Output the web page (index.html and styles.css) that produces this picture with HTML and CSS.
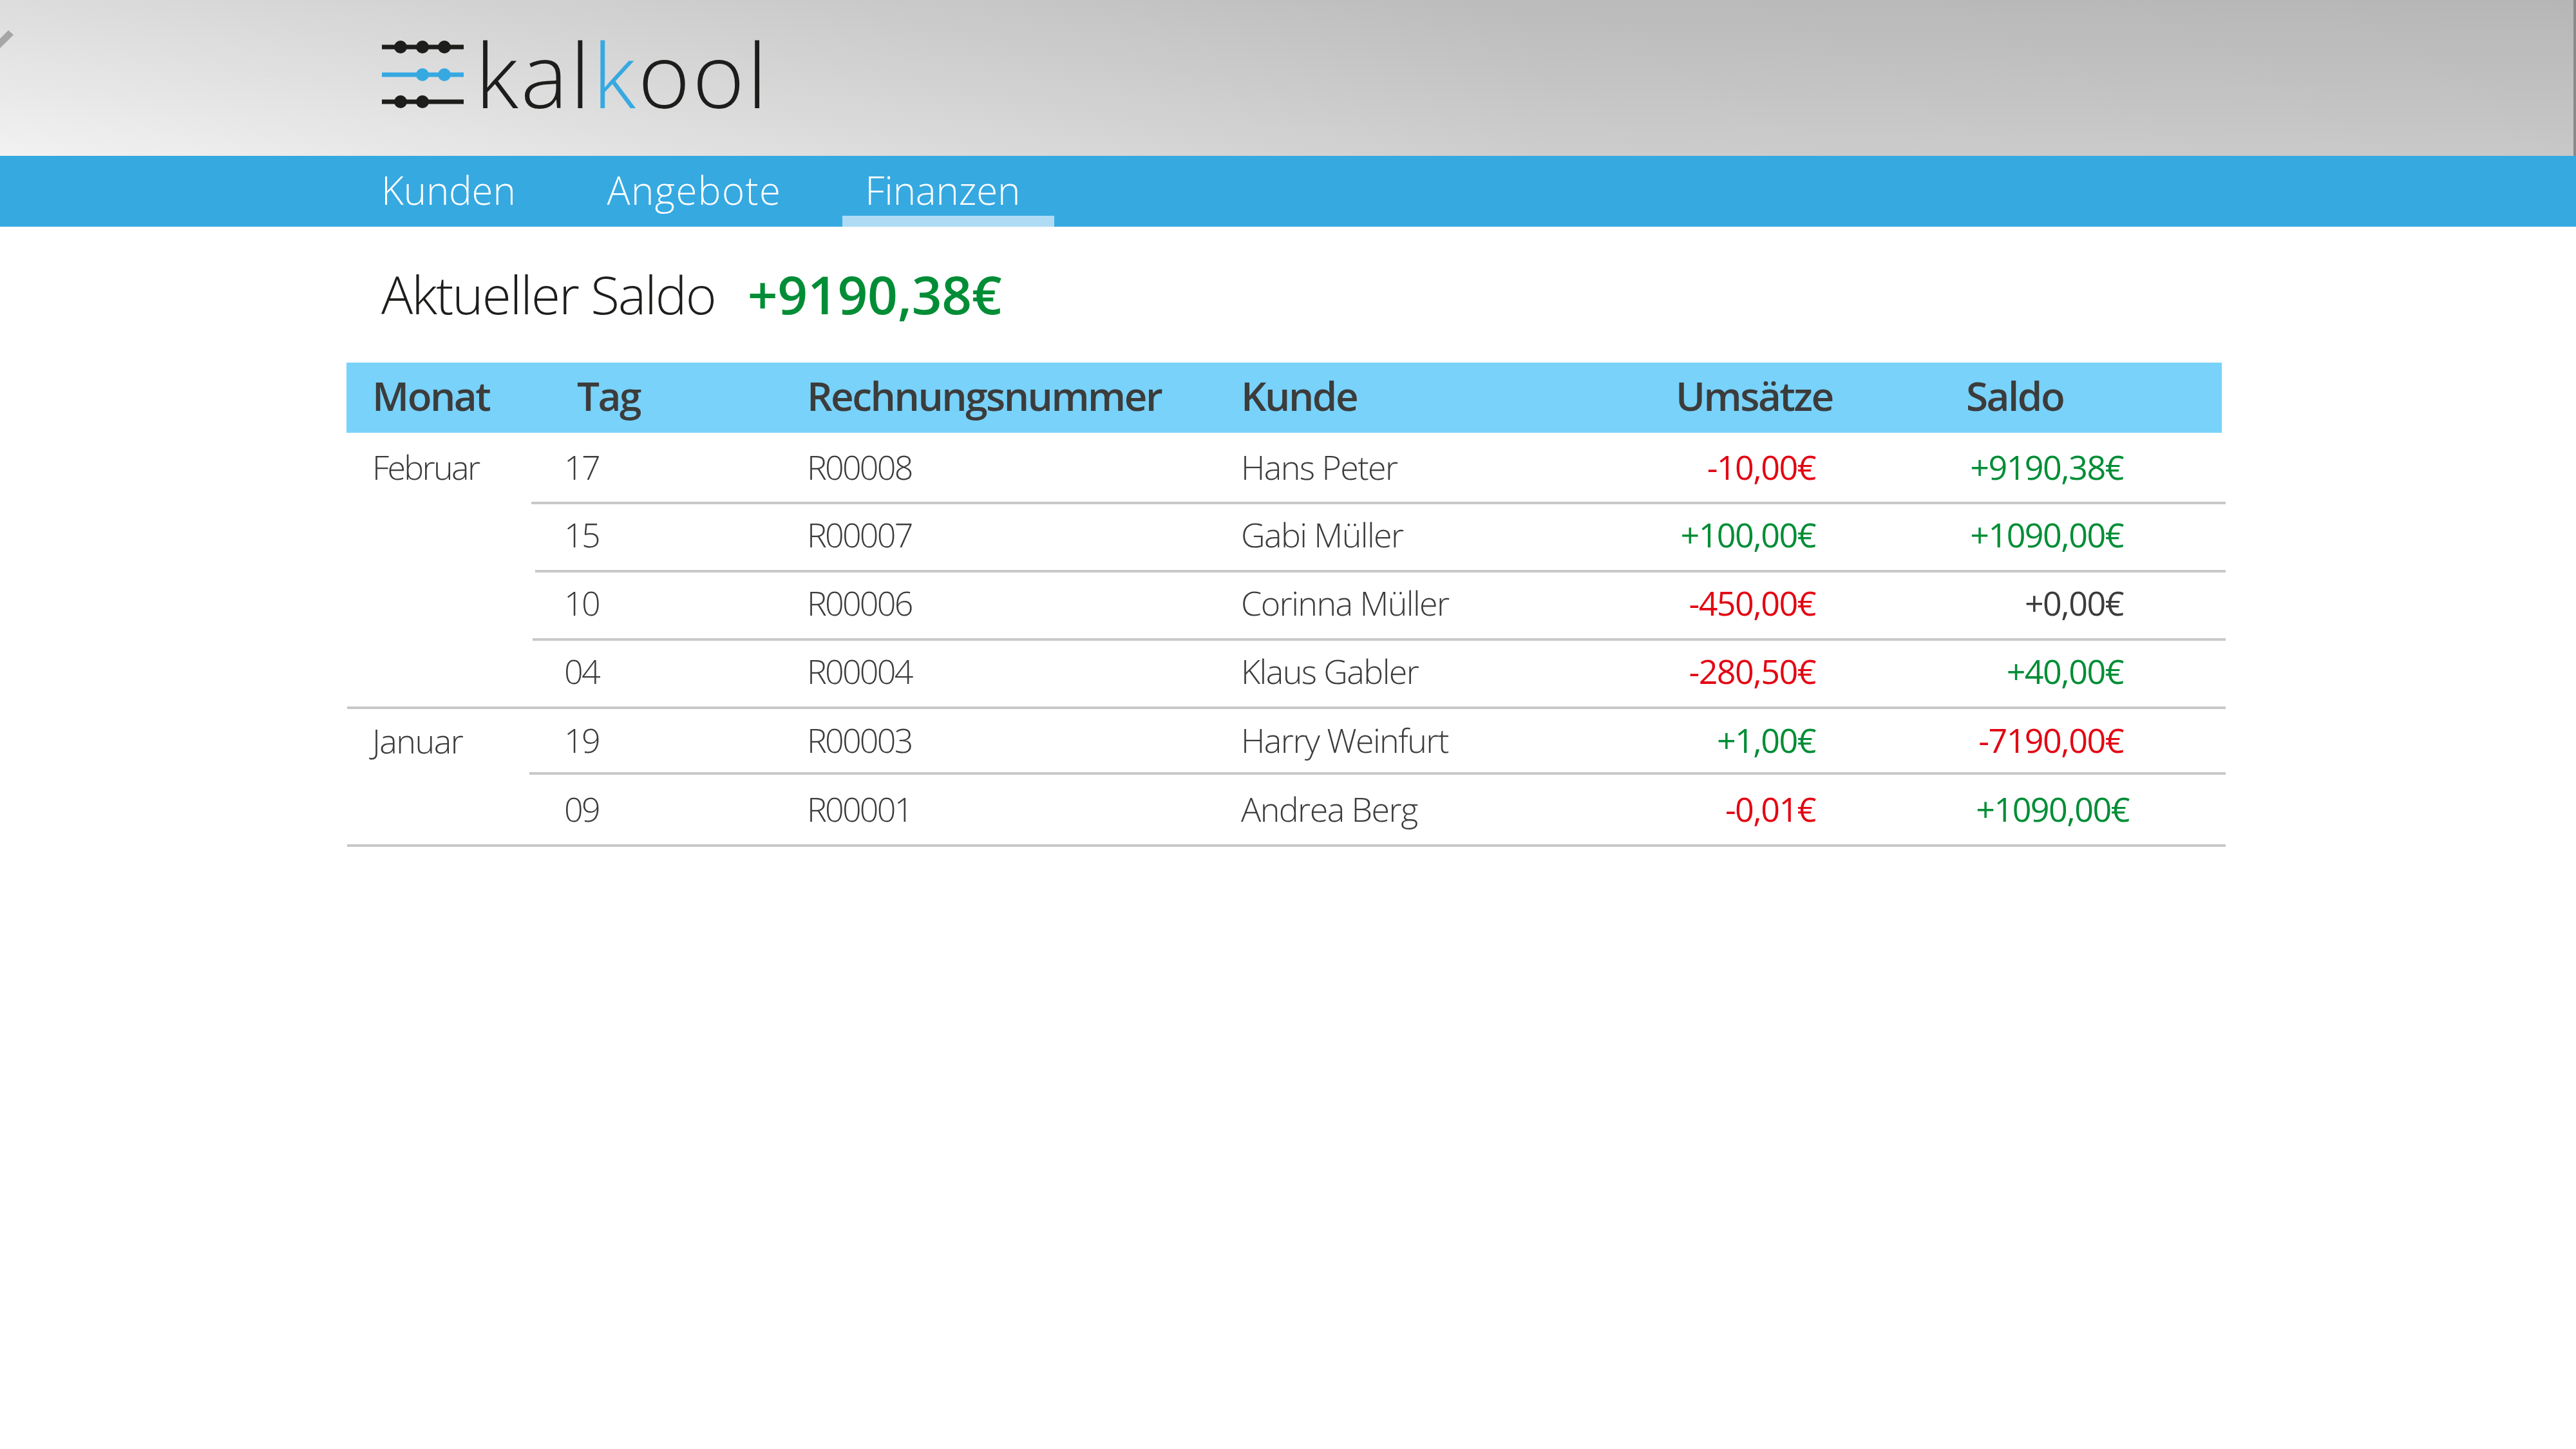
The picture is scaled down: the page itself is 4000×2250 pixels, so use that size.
FILE: index.html
```html
<!DOCTYPE html>
<html lang="de">
<head>
  <meta charset="UTF-8" />
  <meta name="viewport" content="width=device-width, initial-scale=1.0"/>
  <title>kalkool - Finanzen</title>
  <link rel="stylesheet" href="styles.css">
</head>
<body>

  <!-- Header -->
  <header class="top">
    <svg class="back-mark" width="22" height="30" viewBox="0 0 22 30"><polygon points="13,0 21,7 0,28 0,13" fill="#a6a6a6"/></svg>
    <div class="logo">
      <svg class="logo-icon" width="128" height="106" viewBox="0 0 128 106">
        <rect x="0" y="6.500" width="127" height="7" fill="#1d1d1b"/>
        <circle cx="29" cy="10" r="10" fill="#1d1d1b"/>
        <circle cx="63" cy="10" r="10" fill="#1d1d1b"/>
        <circle cx="97" cy="10" r="10" fill="#1d1d1b"/>
        <rect x="0" y="49.500" width="127" height="7" fill="#36a9e1"/>
        <circle cx="63" cy="53" r="10" fill="#36a9e1"/>
        <circle cx="97" cy="53" r="10" fill="#36a9e1"/>
        <rect x="0" y="91.500" width="127" height="7" fill="#1d1d1b"/>
        <circle cx="29" cy="95" r="10" fill="#1d1d1b"/>
        <circle cx="63" cy="95" r="10" fill="#1d1d1b"/>
      </svg>
      <span class="logo-text">kal<span class="logo-k">k</span>ool</span>
    </div>
  </header>

  <!-- Navbar -->
  <nav class="navbar">
    <a href="#" class="nav-kunden">Kunden</a>
    <a href="#" class="nav-angebote">Angebote</a>
    <a href="#" class="nav-finanzen active">Finanzen</a>
  </nav>

  <!-- Saldo -->
  <h1 class="saldo">
    <span class="saldo-label">Aktueller Saldo</span>
    <span class="saldo-value">+9190,38€</span>
  </h1>

  <!-- Table -->
  <section class="finance">
    <div class="head">
      <span class="h-month">Monat</span>
      <span class="h-day">Tag</span>
      <span class="h-invoice">Rechnungsnummer</span>
      <span class="h-client">Kunde</span>
      <span class="h-sales">Umsätze</span>
      <span class="h-balance">Saldo</span>
    </div>

    <div class="month">
      <div class="month-name">Februar</div>
      <div class="rows">
        <div class="row row-first">
          <span class="day">17</span><span class="invoice">R00008</span><span class="client">Hans Peter</span>
          <span class="sales minus">-10,00€</span><span class="balance plus">+9190,38€</span>
        </div>
        <div class="rule rule-1"></div>
        <div class="row">
          <span class="day">15</span><span class="invoice">R00007</span><span class="client">Gabi Müller</span>
          <span class="sales plus">+100,00€</span><span class="balance plus">+1090,00€</span>
        </div>
        <div class="rule rule-2"></div>
        <div class="row">
          <span class="day">10</span><span class="invoice">R00006</span><span class="client">Corinna Müller</span>
          <span class="sales minus">-450,00€</span><span class="balance">+0,00€</span>
        </div>
        <div class="rule rule-3"></div>
        <div class="row">
          <span class="day">04</span><span class="invoice">R00004</span><span class="client">Klaus Gabler</span>
          <span class="sales minus">-280,50€</span><span class="balance plus">+40,00€</span>
        </div>
      </div>
    </div>
    <div class="rule rule-full"></div>

    <div class="month">
      <div class="month-name month-jan">Januar</div>
      <div class="rows">
        <div class="row row-short">
          <span class="day">19</span><span class="invoice">R00003</span><span class="client">Harry Weinfurt</span>
          <span class="sales plus">+1,00€</span><span class="balance minus">-7190,00€</span>
        </div>
        <div class="rule rule-4"></div>
        <div class="row row-last">
          <span class="day">09</span><span class="invoice">R00001</span><span class="client">Andrea Berg</span>
          <span class="sales minus">-0,01€</span><span class="balance balance-wide plus">+1090,00€</span>
        </div>
      </div>
    </div>
    <div class="rule rule-full"></div>
  </section>

</body>
</html>
```

FILE: styles.css
```css
* {
  margin: 0;
  padding: 0;
  box-sizing: border-box;
}

html, body {
  width: 4000px;
  height: 2250px;
  overflow: hidden;
}

body {
  font-family: 'Open Sans', sans-serif;
  font-weight: 300;
  background-color: #fff;
  color: #3c3c3b;
}

/* Header */
.top {
  position: relative;
  height: 242px;
  padding-left: 593px;
  display: flex;
  align-items: flex-start;
  border-right: 4px solid #8a8a8a;
  background:
    linear-gradient(to top, rgba(0,0,0,0) 0%, rgba(0,0,0,0.09) 100%),
    linear-gradient(to right, #f2f2f2 0%, #dedede 32%, #cdcdcd 60%, #c8c8c8 100%);
}

.back-mark {
  position: absolute;
  left: 0;
  top: 47px;
}

.logo {
  display: flex;
  align-items: flex-start;
  padding-top: 63px;
}

.logo-icon {
  margin-right: 17px;
  display: block;
}

.logo-text {
  font-size: 138px;
  line-height: 102px;
  letter-spacing: 3.700px;
  color: #1d1d1b;
}

.logo-k {
  color: #36a9e1;
}

/* Navbar */
.navbar {
  height: 110px;
  padding-left: 592px;
  background-color: #36a9e1;
  display: flex;
}

.navbar a {
  color: #fff;
  text-decoration: none;
  font-size: 60px;
  font-weight: 350;
  line-height: 106px;
  letter-spacing: -0.200px;
}

.navbar .nav-angebote {
  margin-left: 142px;
  letter-spacing: 1.400px;
}

.nav-finanzen {
  margin-left: 95px;
  width: 329px;
  padding-left: 35px;
  border-bottom: 17px solid #aedcf5;
}

/* Saldo */
.saldo {
  display: flex;
  align-items: baseline;
  padding: 48px 0 0 592px;
  height: 211px;
  font-weight: 300;
}

.saldo-label {
  font-size: 82px;
  letter-spacing: -2px;
  color: #1d1d1b;
}

.saldo-value {
  margin-left: 50px;
  font-size: 82px;
  font-weight: 600;
  letter-spacing: -0.300px;
  color: #008d36;
}

/* Table */
.finance {
  width: 2918px;
  margin-left: 538px;
}

.head {
  width: 2912px;
  height: 109px;
  background-color: #78d2fa;
  display: flex;
  font-size: 62px;
  font-weight: 600;
  line-height: 103px;
  letter-spacing: -2.500px;
}

.head span {
  display: block;
}

.h-month { margin-left: 40px; width: 318px; }
.h-day { width: 357px; }
.h-invoice { width: 674px; }
.h-client { width: 675px; }
.h-sales { width: 451px; }

.month {
  display: flex;
}

.month-name {
  width: 287px;
  padding-left: 40px;
  font-size: 52px;
  line-height: 106px;
  letter-spacing: -2.700px;
}

.month-jan {
  line-height: 97px;
  letter-spacing: -1.500px;
}

.rows {
  flex: 1;
}

.row {
  height: 102px;
  display: flex;
  font-size: 52px;
  line-height: 94px;
  letter-spacing: -2.800px;
}

.row-first {
  height: 107px;
  line-height: 106px;
}

.row-short {
  height: 98px;
  line-height: 96px;
}

.row-last {
  height: 108px;
  line-height: 106px;
}

.day { margin-left: 51px; width: 377px; }
.invoice { width: 674px; }
.client { width: 475px; letter-spacing: -1.600px; }
.sales { width: 417px; text-align: right; }
.balance { width: 478px; text-align: right; }
.balance-wide { width: 487px; }

.sales, .balance {
  font-weight: 380;
  letter-spacing: -1.500px;
}

.plus { color: #008d36; }
.minus { color: #e30613; }

.rule {
  height: 4px;
  background-color: #c8c8c8;
}

.rule-1 { margin-left: 0; }
.rule-2 { margin-left: 6px; }
.rule-3 { margin-left: 2px; }
.rule-4 { margin-left: -3px; }
.rule-full { margin-left: 1px; }
```
